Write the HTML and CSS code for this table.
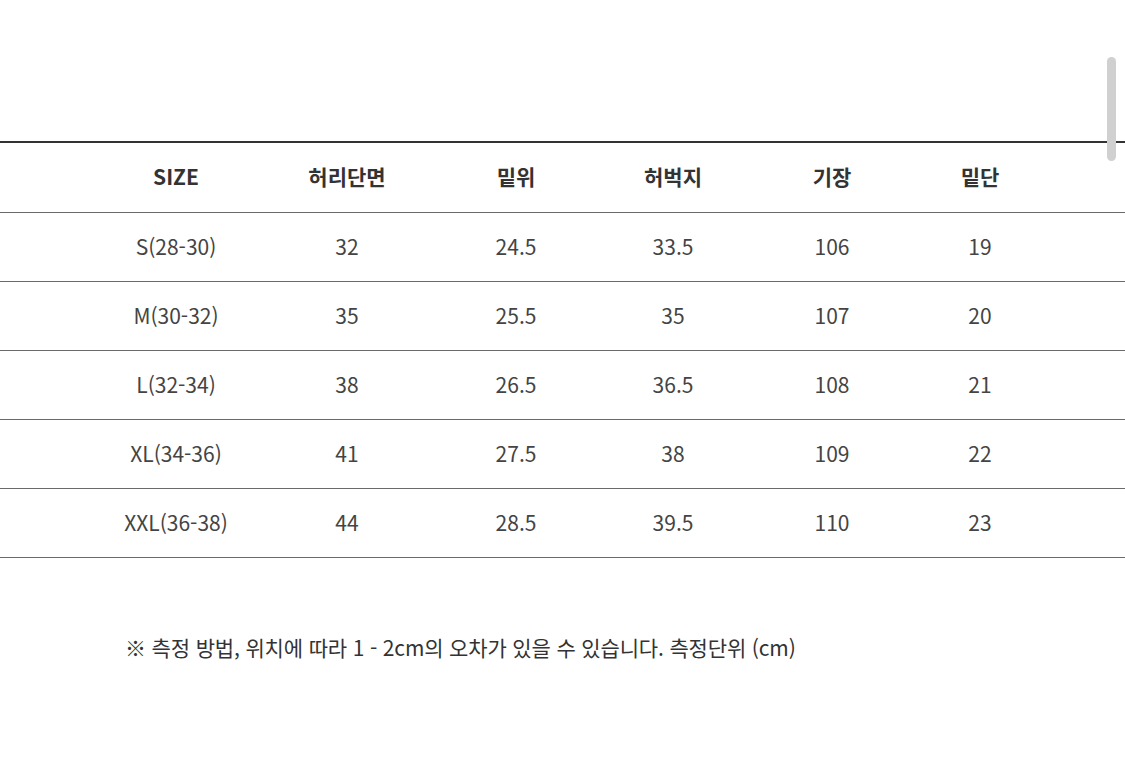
FILE: index.html
```html
<!DOCTYPE html>
<html lang="ko">
<head>
<meta charset="utf-8">
<title>Size</title>
<link rel="stylesheet" href="styles.css">
</head>
<body>
<div class="page">
  <div class="table">
    <div class="row head">
      <div class="cell">SIZE</div>
      <div class="cell">허리단면</div>
      <div class="cell">밑위</div>
      <div class="cell">허벅지</div>
      <div class="cell">기장</div>
      <div class="cell">밑단</div>
    </div>
    <div class="row">
      <div class="cell">S(28-30)</div>
      <div class="cell">32</div>
      <div class="cell">24.5</div>
      <div class="cell">33.5</div>
      <div class="cell">106</div>
      <div class="cell">19</div>
    </div>
    <div class="row">
      <div class="cell">M(30-32)</div>
      <div class="cell">35</div>
      <div class="cell">25.5</div>
      <div class="cell">35</div>
      <div class="cell">107</div>
      <div class="cell">20</div>
    </div>
    <div class="row">
      <div class="cell">L(32-34)</div>
      <div class="cell">38</div>
      <div class="cell">26.5</div>
      <div class="cell">36.5</div>
      <div class="cell">108</div>
      <div class="cell">21</div>
    </div>
    <div class="row">
      <div class="cell">XL(34-36)</div>
      <div class="cell">41</div>
      <div class="cell">27.5</div>
      <div class="cell">38</div>
      <div class="cell">109</div>
      <div class="cell">22</div>
    </div>
    <div class="row">
      <div class="cell">XXL(36-38)</div>
      <div class="cell">44</div>
      <div class="cell">28.5</div>
      <div class="cell">39.5</div>
      <div class="cell">110</div>
      <div class="cell">23</div>
    </div>
  </div>
  <p class="note">※ 측정 방법, 위치에 따라 1 - 2cm의 오차가 있을 수 있습니다. 측정단위 (cm)</p>
</div>
<div class="scrollbar"></div>
</body>
</html>
```
FILE: styles.css
```css
html, body {
  margin: 0;
  padding: 0;
  background: #ffffff;
}
body {
  font-family: "Noto Sans CJK KR", "Noto Sans", sans-serif;
  color: #444;
}
.page {
  padding-top: 141px;
}
.table {
  border-top: 2px solid #333;
}
.row {
  display: grid;
  grid-template-columns: 170px 172px 166px 148px 170px 126px;
  padding-left: 91px;
  height: 66px;
  padding-bottom: 2px;
  align-items: center;
  border-bottom: 1px solid #6a6a6a;
  font-size: 21px;
}
.row.head {
  height: 66px;
  padding-bottom: 3px;
  font-weight: 700;
  color: #333;
}
.cell {
  text-align: center;
  white-space: nowrap;
}
.note {
  margin: 65px 0 0 125px;
  font-size: 21px;
  letter-spacing: -0.15px;
  color: #333;
  line-height: 48px;
}
.scrollbar {
  position: absolute;
  left: 1107px;
  top: 57px;
  width: 9px;
  height: 104px;
  border-radius: 5px;
  background: #d0d0d0;
}
```
